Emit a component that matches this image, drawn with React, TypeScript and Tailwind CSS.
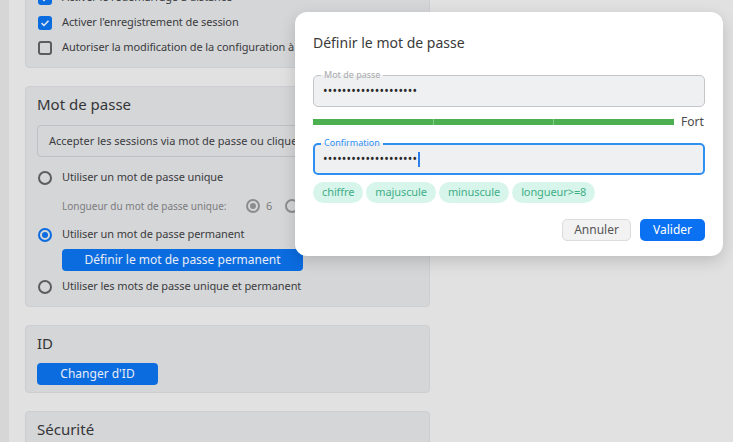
import React from "react";

const font = { fontFamily: '"Noto Sans", "Open Sans", sans-serif' };

function Check({ checked }: { checked: boolean }) {
  return checked ? (
    <div className="w-[14px] h-[14px] shrink-0 rounded-[3px] bg-[#0b6ce0] flex items-center justify-center">
      <svg width="10" height="10" viewBox="0 0 10 10">
        <path d="M1.6 5.1 L4 7.5 L8.5 2.7" stroke="#e4e8ee" strokeWidth="1.5" fill="none" />
      </svg>
    </div>
  ) : (
    <div className="w-[14px] h-[14px] shrink-0 rounded-[3px] border-2 border-[#5c5d5f]" />
  );
}

function Radio({ checked, small }: { checked: boolean; small?: boolean }) {
  const color = small ? "border-[#8c8d8f]" : checked ? "border-[#0b6ce0]" : "border-[#5c5d5f]";
  return (
    <div className={`w-[14px] h-[14px] shrink-0 rounded-full border-2 ${color} flex items-center justify-center`}>
      {checked && <div className={`w-[6px] h-[6px] rounded-full ${small ? "bg-[#8c8d8f]" : "bg-[#0b6ce0]"}`} />}
    </div>
  );
}

function Row({ children, control }: { children: React.ReactNode; control: React.ReactNode }) {
  return (
    <div className="h-[25px] flex items-center gap-[10px] pl-[12px] text-[11px] tracking-[-0.1px] text-[#3b3c3e] whitespace-nowrap">
      {control}
      <span>{children}</span>
    </div>
  );
}

const dots = "••••••••••••••••••••";

export default function App() {
  return (
    <div className="relative w-[733px] h-[442px] overflow-hidden bg-[#e1e1e1]" style={font}>
      <div className="flex h-full">
        <div className="w-[9px] bg-[#d6d6d6] shrink-0" />
        <div className="w-[405px] ml-[16px] flex flex-col gap-[18px] -mt-[23px] shrink-0">
          <div className="rounded-[4px] bg-[#d5d6d8] border border-[#cdced1] py-[7px] flex flex-col">
            <Row control={<Check checked />}>Activer le redémarrage à distance</Row>
            <Row control={<Check checked />}>Activer l'enregistrement de session</Row>
            <Row control={<Check checked={false} />}>Autoriser la modification de la configuration à distance</Row>
          </div>
          <div className="rounded-[4px] bg-[#d5d6d8] border border-[#cdced1] pb-[7px] flex flex-col">
            <div className="h-[35px] flex items-center pl-[11px] text-[15px] text-[#343537]">Mot de passe</div>
            <div className="mx-[11px] mt-[3px] h-[32px] rounded-[4px] border border-[#bfc0c3] flex items-center pl-[11px] text-[11px] text-[#3b3c3e] whitespace-nowrap overflow-hidden">
              Accepter les sessions via mot de passe ou cliquer pour accepter
            </div>
            <div className="h-[8px]" />
            <Row control={<Radio checked={false} />}>Utiliser un mot de passe unique</Row>
            <div className="h-[32px] flex items-center pl-[36px] text-[10px] text-[#7b7c7e] whitespace-nowrap">
              <span className="w-[184px]">Longueur du mot de passe unique:</span>
              <Radio checked small />
              <span className="ml-[6px] text-[11px]">6</span>
              <div className="ml-[13px]"><Radio checked={false} small /></div>
            </div>
            <Row control={<Radio checked />}>Utiliser un mot de passe permanent</Row>
            <div className="pl-[36px] mt-[2px]">
              <div className="w-[241px] h-[22px] rounded-[4px] bg-[#0b6ce0] text-[#e8edf5] text-[12px] flex items-center justify-center">
                Définir le mot de passe permanent
              </div>
            </div>
            <div className="h-[3px]" />
            <Row control={<Radio checked={false} />}>Utiliser les mots de passe unique et permanent</Row>
          </div>
          <div className="rounded-[4px] bg-[#d5d6d8] border border-[#cdced1] pb-[7px] flex flex-col">
            <div className="h-[34px] flex items-center pl-[11px] text-[15px] text-[#343537]">ID</div>
            <div className="pl-[11px] mt-[3px]">
              <div className="w-[121px] h-[22px] rounded-[4px] bg-[#0b6ce0] text-[#e8edf5] text-[12px] flex items-center justify-center">
                Changer d'ID
              </div>
            </div>
          </div>
          <div className="rounded-[4px] bg-[#d5d6d8] border border-[#cdced1] h-[60px] flex flex-col">
            <div className="h-[34px] flex items-center pl-[11px] text-[15px] text-[#343537]">Sécurité</div>
          </div>
        </div>
      </div>

      <div className="absolute left-[295px] top-[12px] w-[428px] h-[244px] rounded-[12px] bg-white shadow-[0_5px_16px_rgba(0,0,0,0.16)] px-[18px] flex flex-col">
        <div className="h-[60px] flex items-center text-[14px] text-[#3a3a3a]">Définir le mot de passe</div>
        <div className="relative mt-[3px] h-[32px] rounded-[5px] border border-[#c4c5c8] bg-[#eff0f2] flex items-center pl-[9px]">
          <span className="absolute left-[7px] top-[-7px] px-[3px] text-[9px] leading-[12px] text-[#a9aaac] bg-[linear-gradient(to_bottom,#ffffff_50%,#eff0f2_50%)]">
            Mot de passe
          </span>
          <span className="text-[12px] tracking-[0.2px] text-[#2a2a2a] leading-[14px]">{dots}</span>
        </div>
        <div className="flex items-center mt-[9px] h-[12px]">
          <div className="flex w-[361px] h-[6px]">
            <div className="flex-1 bg-[#4caf50] border-r border-[#86cc89]" />
            <div className="flex-1 bg-[#4caf50] border-r border-[#86cc89]" />
            <div className="flex-1 bg-[#4caf50]" />
          </div>
          <span className="ml-[7px] text-[12px] text-[#4a4a4a]">Fort</span>
        </div>
        <div className="relative mt-[15px] h-[32px] rounded-[5px] border-2 border-[#2e8ff0] bg-[#eff0f2] flex items-center pl-[8px]">
          <span className="absolute left-[6px] top-[-8px] px-[3px] text-[9px] leading-[12px] text-[#2e8ff0] bg-[linear-gradient(to_bottom,#ffffff_50%,#eff0f2_50%)]">
            Confirmation
          </span>
          <span className="text-[12px] tracking-[0.2px] text-[#2a2a2a] leading-[14px]">{dots}</span>
          <span className="ml-[1px] w-[2px] h-[15px] bg-[#2d7ff0]" />
        </div>
        <div className="flex gap-[3px] mt-[7px]">
          {["chiffre", "majuscule", "minuscule", "longueur>=8"].map((t) => (
            <div key={t} className="h-[21px] px-[9px] rounded-full bg-[#d8f5ec] text-[#3fae86] text-[11px] tracking-[-0.1px] flex items-center">
              {t}
            </div>
          ))}
        </div>
        <div className="flex justify-end gap-[9px] mt-[16px]">
          <div className="w-[69px] h-[22px] rounded-[5px] border border-[#dcdcdc] bg-[#f2f2f3] text-[#555] text-[12px] flex items-center justify-center">
            Annuler
          </div>
          <div className="w-[65px] h-[22px] rounded-[5px] bg-[#0a71f2] text-white text-[12px] flex items-center justify-center">
            Valider
          </div>
        </div>
      </div>
    </div>
  );
}
